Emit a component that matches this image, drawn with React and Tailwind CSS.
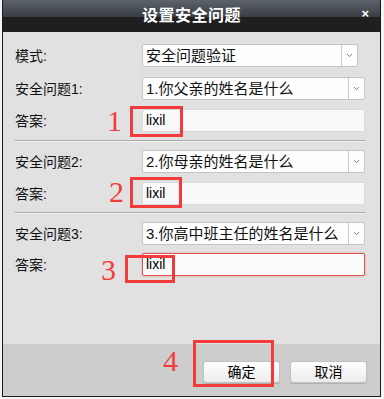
import { ChevronDown } from "lucide-react";

const cjk = "font-['Liberation_Sans','Noto_Sans_CJK_SC',sans-serif]";

// Dropdown look-alike
const Select = ({ text, wide = true }) => (
  <div
    className={`flex h-[23px] items-stretch rounded-[2px] border border-[#c4c4c4] bg-[#fdfdfd] ${
      wide ? "w-[223px]" : "w-[216px]"
    }`}
  >
    <div className="flex flex-1 items-center pl-[3px] text-[15px] text-[#111] leading-none">
      {text}
    </div>
    <div className="flex w-[16px] items-center justify-center border-l border-[#c8c8c8]">
      <ChevronDown size={9} strokeWidth={2.5} className="text-[#777]" />
    </div>
  </div>
);

const Answer = ({ focus }) => (
  <div
    className={`flex h-[23px] w-[223px] items-center rounded-[2px] pl-[3px] text-[14px] text-black font-['Liberation_Sans',sans-serif] ${
      focus
        ? "border border-[#d9534f] bg-[#fbfbfb] shadow-[0_0_2px_#e88]"
        : "border border-[#dadada] bg-[#f9f9f9]"
    }`}
  >
    lixil
  </div>
);

const Row = ({ label, children, className = "" }) => (
  <div className={`flex h-[23px] items-center ${className}`}>
    <div className="w-[127px] text-[14px] text-[#111] leading-none">{label}</div>
    {children}
  </div>
);

const Divider = ({ className = "" }) => (
  <div className={`h-[2px] w-[350px] border-t border-[#a9a9a9] bg-white/60 ${className}`} />
);

const Num = ({ n, className }) => (
  <span
    className={`absolute text-[30px] leading-none text-[#f23c3c] font-['Liberation_Serif',serif] ${className}`}
  >
    {n}
  </span>
);

const Box = ({ className }) => (
  <div className={`absolute border-[3px] border-[#f43b3b] ${className}`} />
);

export default function App() {
  return (
    <div className={`relative h-[399px] w-[384px] bg-[#f4f4f4] ${cjk}`}>
      <div className="ml-[2px] flex h-[397px] w-[379px] flex-col overflow-hidden border-x border-b border-[#1c1c1c]">
        {/* title bar */}
        <div className="relative flex h-[32px] shrink-0 items-center justify-center bg-[linear-gradient(to_bottom,#5d636b_0%,#3a3e44_52%,#1f1f1f_52%,#1f1f1f_100%)]">
          <span className="text-[16px] font-bold text-white tracking-[0.5px]">设置安全问题</span>
          <span className="absolute right-[11px] top-[7px] text-[13px] font-bold text-white leading-none">
            ×
          </span>
        </div>

        {/* body */}
        <div className="flex flex-1 flex-col bg-[#e1e1e1] pl-[12px] pt-[12px]">
          <Row label="模式:">
            <Select text="安全问题验证" wide={false} />
          </Row>
          <Row label="安全问题1:" className="mt-[10px]">
            <Select text="1.你父亲的姓名是什么" />
          </Row>
          <Row label="答案:" className="mt-[9px]">
            <Answer />
          </Row>
          <Divider className="mt-[8px]" />
          <Row label="安全问题2:" className="mt-[8px]">
            <Select text="2.你母亲的姓名是什么" />
          </Row>
          <Row label="答案:" className="mt-[9px]">
            <Answer />
          </Row>
          <Divider className="mt-[7px]" />
          <Row label="安全问题3:" className="mt-[8px]">
            <Select text="3.你高中班主任的姓名是什么" />
          </Row>
          <Row label="答案:" className="mt-[8px]">
            <Answer focus />
          </Row>
        </div>

        {/* footer */}
        <div className="flex h-[52px] shrink-0 items-start justify-end gap-[10px] bg-[#cdcdcd] pr-[13px] pt-[17px]">
          {["确定", "取消"].map((t) => (
            <button
              key={t}
              className="flex h-[22px] w-[77px] items-center justify-center rounded-[3px] border border-[#c2c2c2] bg-[linear-gradient(to_bottom,#ffffff,#ececec)] text-[14px] text-black shadow-[0_1px_1px_rgba(0,0,0,0.15)]"
            >
              {t}
            </button>
          ))}
        </div>
      </div>

      {/* red annotations */}
      <Num n="1" className="left-[107px] top-[106px]" />
      <Box className="left-[130px] top-[106px] h-[31px] w-[53px]" />
      <Num n="2" className="left-[109px] top-[177px]" />
      <Box className="left-[130px] top-[177px] h-[31px] w-[52px]" />
      <Num n="3" className="left-[101px] top-[255px]" />
      <Box className="left-[125px] top-[255px] h-[28px] w-[50px]" />
      <Num n="4" className="left-[163px] top-[346px]" />
      <Box className="left-[193px] top-[340px] h-[47px] w-[81px]" />
    </div>
  );
}
